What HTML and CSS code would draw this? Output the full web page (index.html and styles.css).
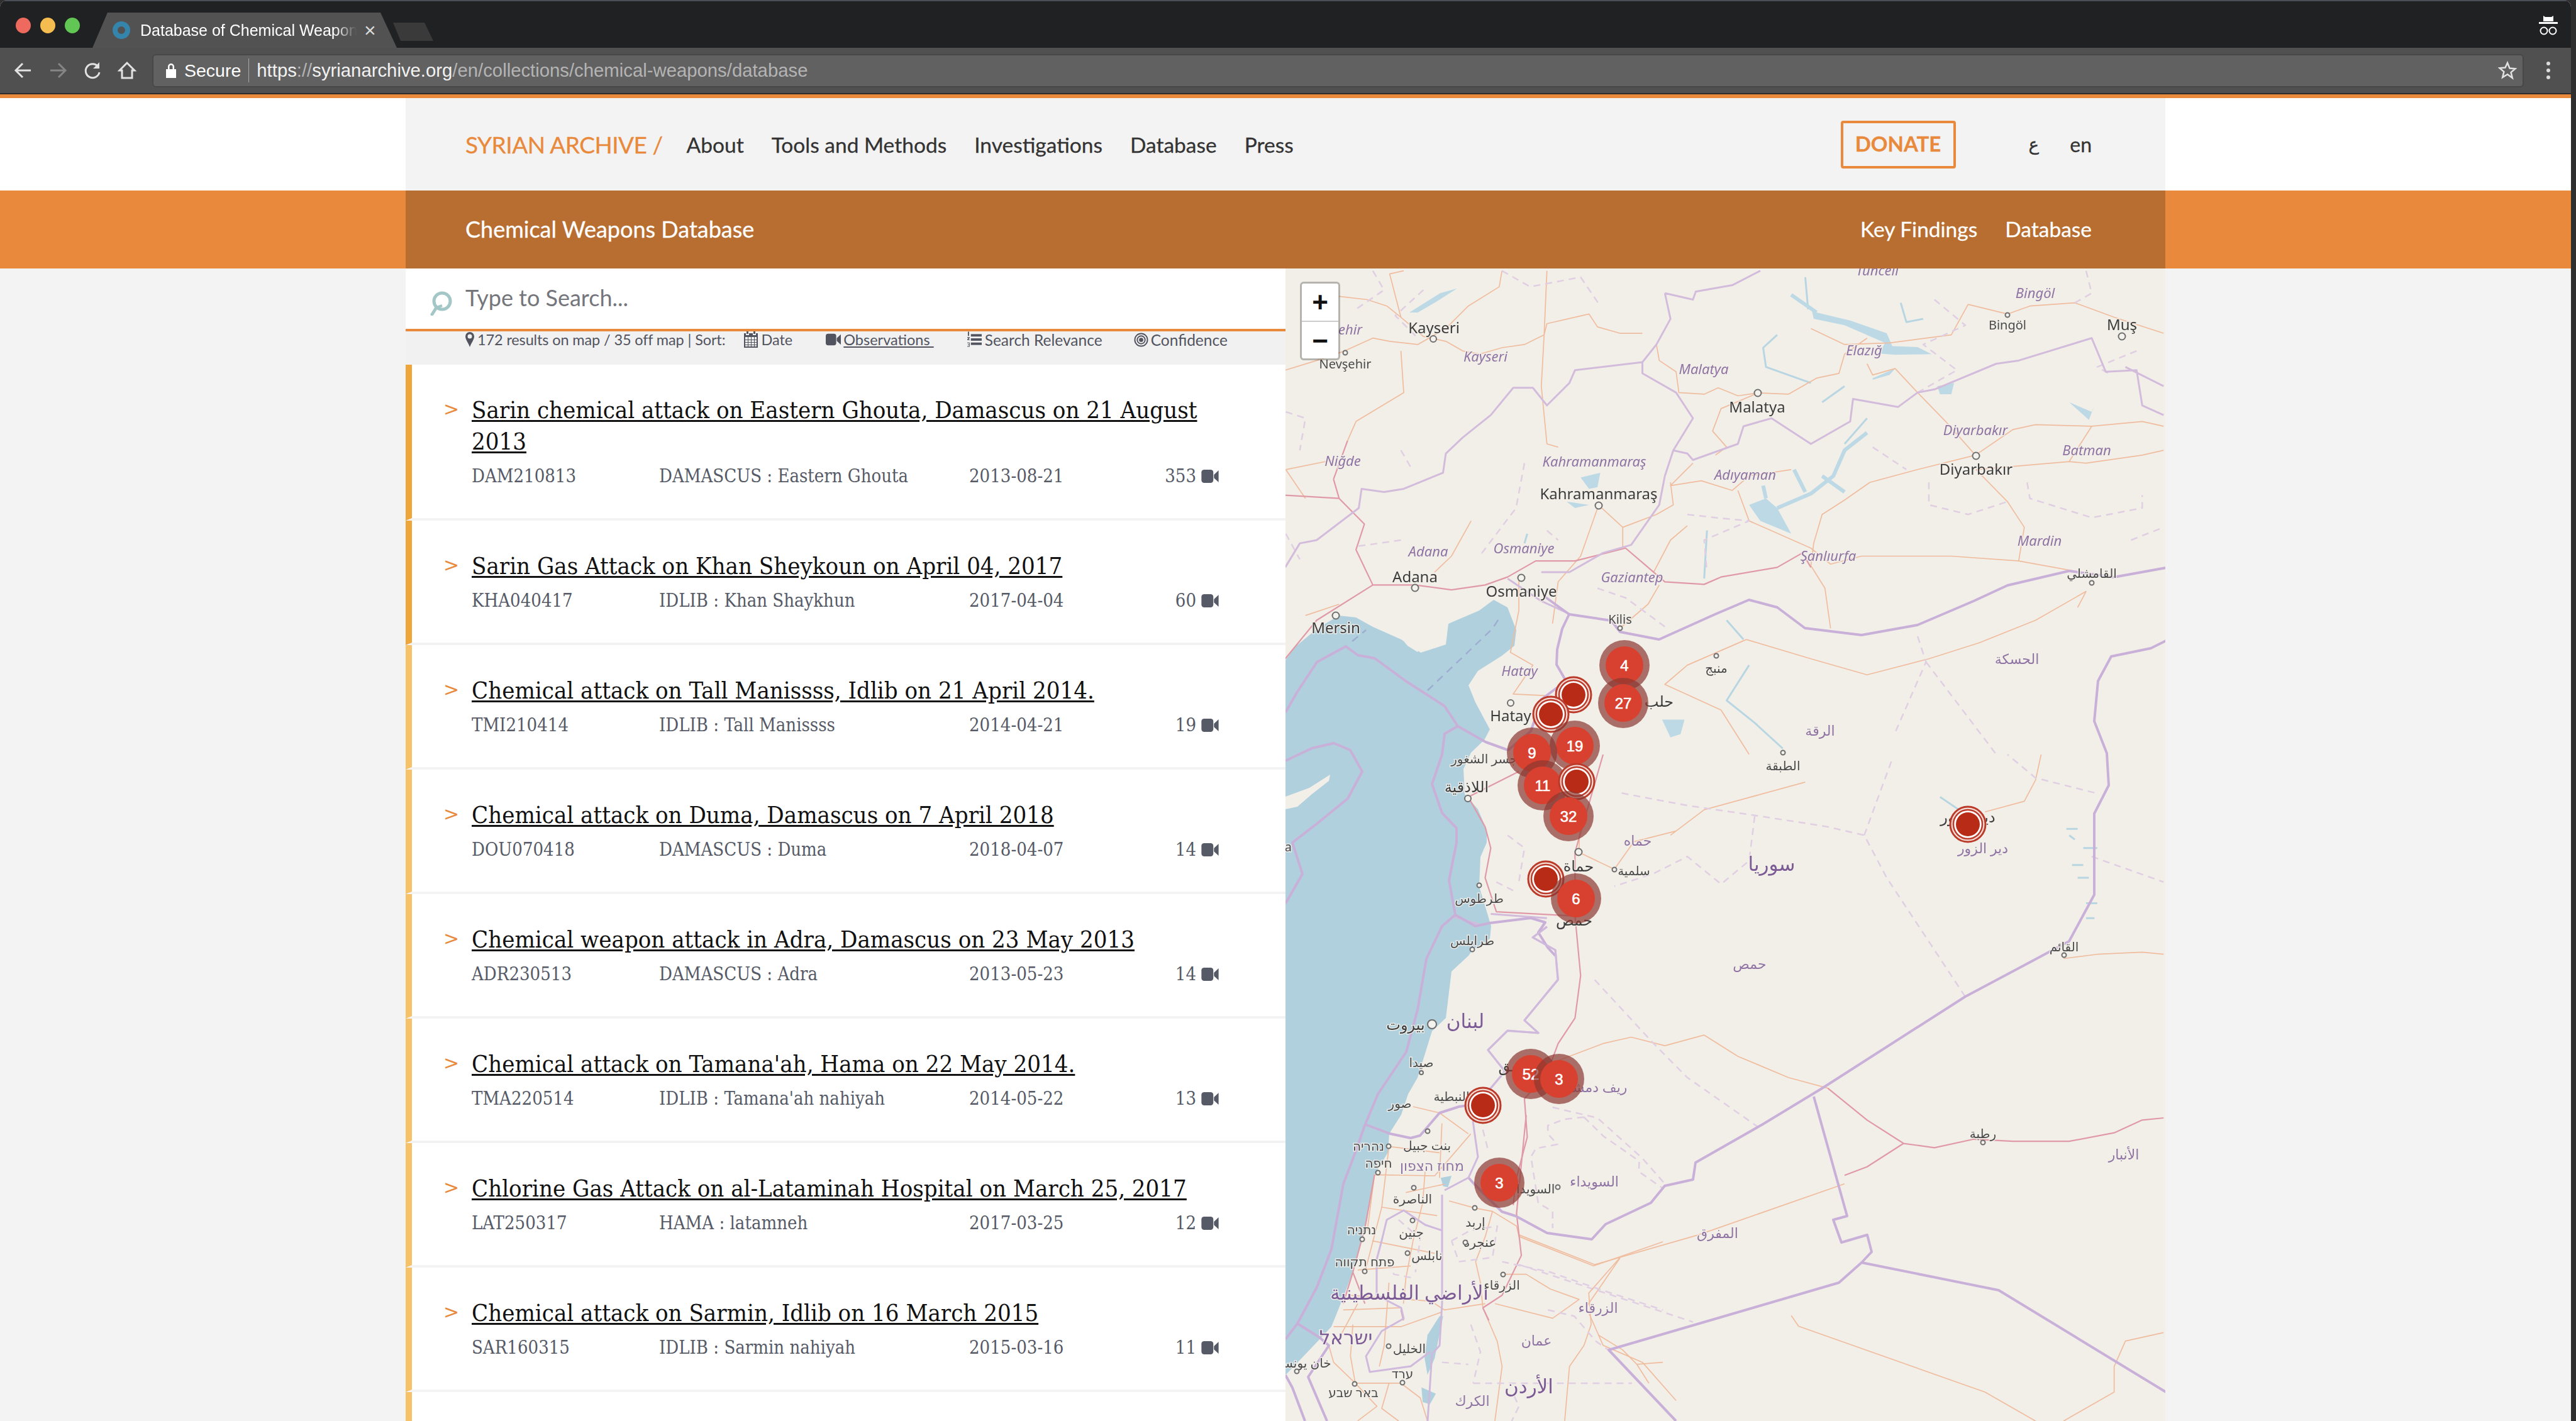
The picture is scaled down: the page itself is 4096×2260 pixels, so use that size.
FILE: index.html
```html
<!DOCTYPE html>
<html lang="en">

<head>
  <meta charset="utf-8" />
  <title>Database of Chemical Weapons</title>
  <link rel="stylesheet" href="styles.css">
</head>

<body>
  <svg class="defs" width="0" height="0">
    <symbol id="ico-video" viewBox="0 0 26 20">
      <rect x="0" y="0" width="18" height="20" rx="4" />
      <path d="M19 7.5 26 1v18l-7-6.5z" />
    </symbol>
    <symbol id="ico-pin" viewBox="0 0 14 24">
      <path fill-rule="evenodd" d="M7 0a7 7 0 0 1 7 7c0 5-5 11-7 17C5 18 0 12 0 7a7 7 0 0 1 7-7zm0 3.500a3.500 3.500 0 1 0 0 7 3.500 3.500 0 0 0 0-7z" />
    </symbol>
    <symbol id="ico-cal" viewBox="0 0 22 26">
      <path fill-rule="evenodd" d="M4 0h3v4H4zM15 0h3v4h-3zM0 3h3v3h5V3h6v3h5V3h3v23H0zM2 9v15h18V9zM2 9" />
      <path d="M2 13h18v1H2zM2 17h18v1H2zM2 21h18v1H2zM6 9h1v15H6zM11 9h1v15h-1zM16 9h1v15h-1z" />
    </symbol>
    <symbol id="ico-list" viewBox="0 0 24 26">
      <rect x="6" y="4" width="18" height="4" />
      <rect x="6" y="11" width="18" height="4" />
      <rect x="6" y="18" width="18" height="4" />
      <path d="M1 0h2v7H1zM0 9h4v1.500L2 13h2v1H0v-1l2-2.500H0zM0 18h4v7H0v-1h3v-2H1v-1h2v-2H0z" />
    </symbol>
    <symbol id="ico-target" viewBox="0 0 24 24">
      <circle cx="12" cy="12" r="10.500" fill="none" stroke="currentColor" stroke-width="2" />
      <circle cx="12" cy="12" r="6.500" fill="none" stroke="currentColor" stroke-width="2" />
      <circle cx="12" cy="12" r="3.500" />
    </symbol>
  </svg>

  <div class="window">
    <!-- browser chrome -->
    <div class="tabbar">
      <span class="light light-red"></span>
      <span class="light light-yellow"></span>
      <span class="light light-green"></span>
      <div class="tab">
        <svg class="favicon" viewBox="0 0 28 28">
          <circle cx="14" cy="14" r="10" fill="none" stroke="#3584ab" stroke-width="8" />
        </svg>
        <span class="tab-title">Database of Chemical Weapons</span>
        <span class="tab-close">×</span>
      </div>
      <div class="newtab"></div>
      <svg class="incognito" viewBox="0 0 30 32">
        <path d="M7 0l3 2h10l3-2v9H7zM0 10h30v3H0z" fill="#fff" />
        <circle cx="8" cy="24" r="5.500" fill="none" stroke="#fff" stroke-width="2" />
        <circle cx="22" cy="24" r="5.500" fill="none" stroke="#fff" stroke-width="2" />
      </svg>
    </div>

    <div class="toolbar">
      <svg class="tb-icon" viewBox="0 0 30 30">
        <path d="M27 15H4M14 4 3 15l11 11" fill="none" stroke="#e2e2e2" stroke-width="3" />
      </svg>
      <svg class="tb-icon" viewBox="0 0 30 30">
        <path d="M3 15h23M16 4l11 11-11 11" fill="none" stroke="#858585" stroke-width="3" />
      </svg>
      <svg class="tb-icon" viewBox="0 0 30 30">
        <path d="M24 9a11 11 0 1 0 2 9" fill="none" stroke="#e2e2e2" stroke-width="3" />
        <path d="M26 2v10H16z" fill="#e2e2e2" />
      </svg>
      <svg class="tb-icon" viewBox="0 0 30 30">
        <path d="M15 3 3 15h4v12h16V15h4z" fill="none" stroke="#e2e2e2" stroke-width="3" />
      </svg>
      <div class="omnibox">
        <svg class="lock" viewBox="0 0 16 24">
          <path d="M0 10h16v14H0z M3 11V6a5 5 0 0 1 10 0v5h-2.500V6a2.500 2.500 0 0 0-5 0v5z" fill="#fff" />
        </svg>
        <span class="secure">Secure</span>
        <span class="url"><b>https</b><i>://</i><b>syrianarchive.org</b><i>/en/collections/chemical-weapons/database</i></span>
        <svg class="star" viewBox="0 0 30 30">
          <path d="M15 3l3.500 8.500 9 .7-6.900 5.900 2.200 8.900L15 21.300 7.200 26l2.200-8.900-6.900-5.900 9-.7z" fill="none" stroke="#e2e2e2" stroke-width="2.500" />
        </svg>
      </div>
      <svg class="menu-dots" viewBox="0 0 8 30">
        <circle cx="4" cy="4" r="3" fill="#dcdcdc" />
        <circle cx="4" cy="15" r="3" fill="#dcdcdc" />
        <circle cx="4" cy="26" r="3" fill="#dcdcdc" />
      </svg>
    </div>

    <!-- site -->
    <div class="page">
      <header class="band band-nav">
        <nav class="wrap sitenav">
          <a class="brand">SYRIAN ARCHIVE /</a>
          <a>About</a>
          <a>Tools and Methods</a>
          <a>Investigations</a>
          <a>Database</a>
          <a>Press</a>
          <a class="donate">DONATE</a>
          <a class="lang lang-ar" lang="ar">ع</a>
          <a class="lang lang-en">en</a>
        </nav>
      </header>
      <div class="band band-sub">
        <div class="wrap subnav">
          <span class="subnav-title">Chemical Weapons Database</span>
          <a class="subnav-first">Key Findings</a>
          <a>Database</a>
        </div>
      </div>

      <main class="wrap content">
        <section class="results">
          <div class="search">
            <svg class="search-icon" viewBox="0 0 36 40">
              <circle cx="20" cy="17" r="13" fill="none" stroke="#a3c6c6" stroke-width="5" />
              <path d="M11 27 4 38" fill="none" stroke="#a3c6c6" stroke-width="5" stroke-linecap="round" />
              <path d="M11 27 20 24" fill="none" stroke="#a3c6c6" stroke-width="4" />
            </svg>
            <span class="search-text">Type to Search...</span>
          </div>
          <div class="sortbar">
            <svg class="ico ico-pin"><use href="#ico-pin" /></svg>
            <span class="count">172 results on map / 35 off map | Sort:</span>
            <span class="sort sort-date"><svg class="ico ico-cal"><use href="#ico-cal" /></svg>Date</span>
            <span class="sort sort-obs"><svg class="ico ico-vid"><use href="#ico-video" /></svg><u>Observations&nbsp;</u></span>
            <span class="sort sort-rel"><svg class="ico ico-list"><use href="#ico-list" /></svg>Search Relevance</span>
            <span class="sort sort-conf"><svg class="ico ico-target"><use href="#ico-target" /></svg>Confidence</span>
          </div>

          <ul class="rows">
            <li class="row row-hot">
              <span class="chev">&gt;</span>
              <div class="row-body">
                <a class="row-title">Sarin chemical attack on Eastern Ghouta, Damascus on 21 August 2013</a>
                <div class="row-meta"><span>DAM210813</span><span>DAMASCUS : Eastern Ghouta</span><span>2013-08-21</span><span class="num">353</span><svg class="vid"><use href="#ico-video" /></svg></div>
              </div>
            </li>
            <li class="row row-hot">
              <span class="chev">&gt;</span>
              <div class="row-body">
                <a class="row-title">Sarin Gas Attack on Khan Sheykoun on April 04, 2017</a>
                <div class="row-meta"><span>KHA040417</span><span>IDLIB : Khan Shaykhun</span><span>2017-04-04</span><span class="num">60</span><svg class="vid"><use href="#ico-video" /></svg></div>
              </div>
            </li>
            <li class="row">
              <span class="chev">&gt;</span>
              <div class="row-body">
                <a class="row-title">Chemical attack on Tall Manissss, Idlib on 21 April 2014.</a>
                <div class="row-meta"><span>TMI210414</span><span>IDLIB : Tall Manissss</span><span>2014-04-21</span><span class="num">19</span><svg class="vid"><use href="#ico-video" /></svg></div>
              </div>
            </li>
            <li class="row">
              <span class="chev">&gt;</span>
              <div class="row-body">
                <a class="row-title">Chemical attack on Duma, Damascus on 7 April 2018</a>
                <div class="row-meta"><span>DOU070418</span><span>DAMASCUS : Duma</span><span>2018-04-07</span><span class="num">14</span><svg class="vid"><use href="#ico-video" /></svg></div>
              </div>
            </li>
            <li class="row">
              <span class="chev">&gt;</span>
              <div class="row-body">
                <a class="row-title">Chemical weapon attack in Adra, Damascus on 23 May 2013</a>
                <div class="row-meta"><span>ADR230513</span><span>DAMASCUS : Adra</span><span>2013-05-23</span><span class="num">14</span><svg class="vid"><use href="#ico-video" /></svg></div>
              </div>
            </li>
            <li class="row">
              <span class="chev">&gt;</span>
              <div class="row-body">
                <a class="row-title">Chemical attack on Tamana'ah, Hama on 22 May 2014.</a>
                <div class="row-meta"><span>TMA220514</span><span>IDLIB : Tamana'ah nahiyah</span><span>2014-05-22</span><span class="num">13</span><svg class="vid"><use href="#ico-video" /></svg></div>
              </div>
            </li>
            <li class="row">
              <span class="chev">&gt;</span>
              <div class="row-body">
                <a class="row-title">Chlorine Gas Attack on al-Lataminah Hospital on March 25, 2017</a>
                <div class="row-meta"><span>LAT250317</span><span>HAMA : latamneh</span><span>2017-03-25</span><span class="num">12</span><svg class="vid"><use href="#ico-video" /></svg></div>
              </div>
            </li>
            <li class="row">
              <span class="chev">&gt;</span>
              <div class="row-body">
                <a class="row-title">Chemical attack on Sarmin, Idlib on 16 March 2015</a>
                <div class="row-meta"><span>SAR160315</span><span>IDLIB : Sarmin nahiyah</span><span>2015-03-16</span><span class="num">11</span><svg class="vid"><use href="#ico-video" /></svg></div>
              </div>
            </li>
            <li class="row row-blank"></li>
          </ul>
        </section>

        <section class="map">
          <!-- the viewBox uses page pixels, so everything below reads as coordinates on the screenshot -->
          <svg class="map-svg" viewBox="2044 427 1399 1833">
            <g class="tiles">
            <rect x="2044" y="427" width="1399" height="1833" fill="#f2efe9" />

            <!-- sea and lakes -->
            <path class="water" d="M2044 1050 2058 1030 2094 1000 2129 979 2156 982 2183 997 2228 1017 2259 1038 2299 1025 2303 992 2352 971 2375 954 2397 966 2411 1002 2408 1027 2388 1043 2350 1067 2335 1090 2346 1117 2362 1147 2369 1160 2360 1177 2339 1197 2327 1223 2329 1263 2350 1287 2364 1320 2364 1340 2354 1363 2352 1410 2362 1443 2371 1473 2369 1493 2342 1510 2335 1520 2308 1545 2299 1619 2277 1640 2254 1714 2239 1740 2228 1773 2209 1803 2207 1833 2186 1867 2174 1940 2151 2023 2136 2063 2117 2110 2086 2143 2044 2187z" />
            <path class="land" d="M2044 1267 2082 1253 2115 1232 2113 1242 2086 1263 2063 1283 2044 1287z" />
            <path class="land" d="M2224 1010 2232 1008 2258 1031 2254 1037 2238 1027z" />
            <g transform="translate(2040 400) scale(.893 .51)">
              <path class="lake" d="M940 170 950 190 1010 215 1075 255 1085 295 1130 298 1155 320 1090 322 1062 318 1072 285 1000 230 945 210z" />
              <path class="lake" d="M1050 395 1090 365 1080 385 1050 400z" />
              <path class="lake" d="M830 790 860 770 880 800 905 880 850 840z" />
              <path class="lake" d="M225 190 280 130 310 115 270 160 240 190z" />
              <path class="lake" d="M1400 470 1440 500 1445 480 1435 525z" />
              <path class="lake" d="M1165 420 1195 410 1190 445 1170 445z" />
              <path class="lake" d="M530 705 565 690 560 735 545 740z" />
              <path class="lake" d="M505 780 545 790 520 800z" />
              <path class="lake" d="M675 1460 715 1460 708 1505 690 1515z" />
              <path class="river" d="M930 80 935 180M880 260 855 300 860 360 940 410M1000 420 960 470M1100 160 1110 220 1140 210M1040 520 1000 600M755 870 750 1020M790 1150 820 1210M830 1290 790 1400 840 1470 890 1550M435 880 430 910" />
              <path class="river-wide" d="M880 800 940 755 980 700 1000 620 1040 565M855 730 860 770M910 680 930 750M960 700 1000 750M905 135 950 190" />
            </g>
            <g transform="translate(2044 1740) scale(.3827 .3333)">
              <path class="water" d="M645 400 690 390 675 445 655 440z" />
              <path class="water" d="M640 1060 655 1060 620 1260 590 1340 578 1260 590 1150z" />
              <path class="water" d="M565 1400 625 1430 600 1480 570 1470z" />
            </g>
            <g transform="translate(2040 1200) scale(.893 .676)">
              <path class="river" d="M1170 100 1215 140M1395 175 1415 175M1400 190 1410 200M1425 220 1450 220M1405 260 1425 260M1415 290 1435 290M1430 350 1450 350M1430 385 1445 385" />
            </g>

            <!-- administrative lines, roads -->
            <g transform="translate(2040 400) scale(.893 .51)">
              <path class="road" d="M100 140 150 150 185 170 210 205 250 265 290 280 320 310 350 320 390 300 430 290 465 260 470 225 545 195 560 235 600 255 640 255M210 205 190 70 215 60M390 60 385 110 330 170 290 240 240 290 190 280 160 270 110 310 60 340 4 370M465 260 470 60M465 260 460 420 470 600 490 610M665 290 670 340 700 375 705 440 750 445 775 425 810 450 846 441 900 445 950 395 990 380 1000 320 1040 270M1040 350 1050 385 1090 365 1130 440 1180 530 1233 635 1300 555 1340 540 1440 545 1530 530 1568 545M940 240 1000 290 1080 285 1190 260 1220 165 1290 195 1330 170 1410 160 1480 205 1568 255M846 441 780 490 765 560 790 610 770 635M5 680 90 650M5 680 40 770M730 660 690 730 745 715 800 745 830 700 905 680M1233 635 1130 680 1045 720 1000 775 960 820 945 910 940 980 965 1050 975 1175M810 745 830 840 940 925 975 975 1030 950 1190 950 1310 965 1420 1000M1234 680 1400 655 1440 545M1234 680 1290 780 1320 860 1310 965M1400 655 1430 660 1530 635 1568 620M562 791 605 860 605 920M562 791 530 950 490 1030 480 1160M605 860 665 820 695 790 690 720M335 840 300 950 270 1000M660 1000 690 900 720 855M420 1020 420 1120 405 1250 445 1290 410 1380 470 1385M600 1175 650 1100 670 1040M825 1210 940 1270 1040 1320 1150 1270 1240 1220 1340 1150 1430 1060 1415 1110M825 1210 720 1290 680 1350 780 1430 830 1568M40 1135 100 1100M115 590 130 530 215 440 210 310" />
              <path class="trunk" d="M4 760 100 770 145 850 130 930 160 1040 235 1040 300 1055 360 1040 400 1015 450 965 520 965 610 925 640 970 680 1030 750 1038 780 1015 880 985 925 940 940 985M160 1040 60 1150 4 1270M90 710 115 590 M100 770 90 710" />
              <path class="dist" d="M160 60 180 120 130 180M250 120 200 200 240 270M390 60 440 110 530 80 565 170M1160 150 1215 230 1140 290 1200 370 1130 440M1430 60 1440 130 1410 160M1520 310 1450 360 1470 380M1150 720 1150 790 1220 820 1290 780M1325 720 1330 770 1440 830 1530 800 1530 760M1510 900 1568 860M1050 610 1110 680M5 500 40 520 30 620M210 620 230 680M430 660 415 800 350 950M210 900 130 920M470 870 490 900M720 820 770 830 830 840 750 900 755 1000M560 1050 610 1080 680 1170M1130 1200 1145 1280 1090 1500M1145 1280 1270 1568M5 880 30 960" />
              <path class="prov" d="M640 345 520 370 510 410 470 480 445 425 410 425 370 510 320 580 290 630 285 690 215 740 180 750 140 740 135 800 60 900 30 910 4 985M680 130 690 210 665 290 640 345 640 380 700 440 730 520 695 620 720 630 730 650 810 600 820 545 870 520 940 600 1010 530 1015 460 1095 485 1130 440 1160 430 1270 350 1310 340 1440 270 1465 375 1520 370 1530 480 1568 510M680 130 730 150 735 125 800 105 850 60M695 620 680 700 670 790 620 915 570 940 510 1000 460 1000M400 1020 460 1090 510 1130M1568 420 1500 360" />
            </g>
            <g transform="translate(2040 1200) scale(.893 .676)">
              <path class="road" d="M1000 1010 740 1130 555 1200 420 1130M490 720 570 680 620 665 680 685 750 660 810 710 900 760 970 785M600 1185 540 1300 570 1390 640 1430 700 1520M905 1320 918 1345 1250 1500 1340 1568M1568 1360 1500 1380 1480 1440 1480 1500 1390 1568M1390 480 1450 470 1530 465 1568 470M1250 135 1320 110 1340 60 1350 0M690 190 750 130 930 65M590 270 527 230M590 270 625 205 700 180M527 230 530 110" />
              <path class="trunk" d="M520 230 520 380 530 520 520 620 490 680 470 750 430 810 435 900 415 1000 410 1060M360 170 370 220 360 290 380 370 520 380M970 785 1040 860 1105 915 1160 925 1230 905 1300 910 1400 910 1480 890 1530 860 1568 855M1105 915 1040 970 1000 990M570 0 520 230M360 170 330 100 420 40" />
              <path class="dist" d="M1215 570 1140 420 1075 290 1035 190 970 170 850 145 720 120 600 90M1035 190 1085 10M840 145 830 250 780 305 720 240 660 280 590 310M1445 90 1340 55 1290 0M1440 240 1568 300M555 530 660 680 720 760 850 880M480 830 560 855 640 950 680 1010M420 1200 730 1335M400 190 430 220 420 300M380 300 410 320" />
              <path class="prov" d="M470 405 445 430 485 460 490 530 430 625 455 655 400 650 365 695 395 745 335 840M370 375 470 385M300 380 350 400" />
            </g>
            <g transform="translate(2044 1740) scale(.3827 .3333)">
              <path class="road" d="M370 385 340 650M430 250 400 540 330 850M430 250 640 280M370 385 620 390 770 190M500 470 660 430M400 540 630 580M360 700 620 760M300 840 520 820M260 960 620 990M240 1030 480 1020M200 1110 480 1110 650 1040M280 1100 270 1250 290 1380 480 1380 560 1450 590 1560M290 1380 200 1280 180 1200M290 1380 380 1490 300 1560M650 140 640 400M580 370 570 520 530 700 500 880 490 1000M430 900 410 1200 390 1300M680 510 790 545 860 560 960 630 970 680 1280 820 1568 705M860 560 830 680 790 800 810 900 820 1020 880 1180 900 1300 870 1560M900 860 1000 860 1100 930 1220 980 1110 1070 870 1000M1390 780 1260 950 1270 1100 1240 1200 1180 1300 1160 1560M1300 1150 1400 1220 1460 1290 1568 1280M1460 1290 1510 1380M530 60 640 90 760 190M300 1000 230 1150M620 1000 660 1030 830 1000M430 1380 400 1500 470 1560" />
              <path class="trunk" d="M1000 100 960 570 980 770 900 960 820 1020M370 385 330 640 280 850 240 1000M280 850 330 1000M820 1020 845 1080M480 1030 490 1080" />
              <path class="dist" d="M1240 110 1160 120 1090 150 1090 190 1130 240 1040 260 1020 300 1050 520 1110 560 1110 640M1240 110 1320 200 1470 320 1468 370 1568 450M780 1380 1440 1380M690 700 770 650 880 630 860 780 720 800 690 700M900 800 1100 850 1300 930 1568 1030M1090 1030 1200 1060 1290 1180 1340 1220M820 170 840 260M770 1100 810 1230 780 1380M430 800 450 860 540 880M650 1280 760 1290M470 600 560 690 540 850M950 1440 970 1490 940 1560" />
            </g>

            <!-- national borders and sea boundaries -->
            <path class="nation" d="M2044 1133 2063 1100 2094 1053 2140 1028 2159 1042 2186 1047 2235 1083 2297 1123 2318 1155 2362 1180 2398 1193 2434 1163 2442 1140 2450 1113 2490 1083 2475 1057 2476 1033 2484 1000 2495 977 2455 948" />
            <path class="nation" d="M2318 1155 2297 1167 2293 1200 2277 1247 2293 1293 2316 1317 2316 1340 2304 1400 2314 1455 2346 1473 2369 1468 2434 1460 2457 1467 2446 1483 2461 1507 2473 1520" />
            <path class="nation" d="M2314 1455 2293 1473 2268 1525 2254 1606 2236 1673 2191 1740 2170 1790 2155 1833 2136 1883 2117 1987 2094 2047 2063 2105 2044 2130" />
            <path class="nation" d="M2044 1210 2086 1190 2121 1182 2147 1193 2166 1227 2143 1270 2094 1310 2055 1340 2071 1390 2044 1437" />
            <path class="nation" d="M2170 1788 2210 1803 2243 1810 2258 1806 2289 1770 2320 1760 2342 1757" />
            <path class="nation" d="M2063 2105 2098 2127 2113 2140 2080 2190 2110 2260M2044 2187 2055 2207 2075 2260" />
            <path class="nation" d="M2495 977 2562 987 2576 1005 2638 1017 2727 977 2781 954 2826 966 2870 999 2960 1010 3049 994 3138 956 3192 931 3290 908 3361 918 3444 903" />
            <path class="nation" d="M3444 1019 3420 1031 3357 1044 3336 1083 3330 1147 3350 1198 3353 1249 3330 1294 3330 1423 3290 1497 3219 1535 3125 1585 2897 1731 2803 1788 2696 1849 2692 1876 2647 1886 2625 1913 2553 1947 2531 1971 2460 1961 2410 1934 2388 1927 2344 1883 2335 1873" />
            <path class="nation" d="M2884 1744 2937 1934 2915 1940 2928 1976 2969 1964 2976 1991 2960 2008 2924 2040 2558 2147 2665 2260M2960 2008 3178 2052 3444 2214" />
            <path class="nation-thin" d="M2293 1900 2293 2073 2289 2140 2277 2153 2270 2260M2293 1957 2266 1948 2232 1925 2205 1940 2197 1973 2189 2003 2189 2060 2228 2080 2232 2097 2197 2117 2172 2157 2178 2182 2243 2173 2274 2150M2342 1783 2350 1840 2335 1873 2297 1893M2460 1474 2437 1491 2473 1511 2477 1558 2424 1623 2446 1643 2397 1639 2366 1670 2393 1704 2339 1768" />
            <path class="sea-dash" d="M2270 1098 2373 1000 2386 980" />
            <path class="sea-dash" d="M2150 1020 2172 1002" />

            <!-- place labels -->
            <g class="lbl-state">
              <text x="2147" y="532">ehir</text>
              <text x="2362" y="575">Kayseri</text>
              <text x="2985" y="438">Tunceli</text>
              <text x="3236" y="474">Bingöl</text>
              <text x="2709" y="595">Malatya</text>
              <text x="2964" y="565">Elazığ</text>
              <text x="3141" y="692">Diyarbakır</text>
              <text x="3318" y="724">Batman</text>
              <text x="2135" y="741">Niğde</text>
              <text x="2535" y="742">Kahramanmaraş</text>
              <text x="2775" y="763">Adıyaman</text>
              <text x="2271" y="885">Adana</text>
              <text x="2423" y="880">Osmaniye</text>
              <text x="2907" y="892">Şanlıurfa</text>
              <text x="2595" y="926">Gaziantep</text>
              <text x="3243" y="868">Mardin</text>
              <text x="2416" y="1075">Hatay</text>
              <text x="3470" y="482">Muş</text>
            </g>
            <g class="lbl-ar">
              <text x="3207" y="1056">الحسكة</text>
              <text x="2894" y="1170">الرقة</text>
              <text x="2604" y="1345">حماه</text>
              <text x="2782" y="1541">حمص</text>
              <text x="2535" y="1737">ريف دمشق</text>
              <text x="3153" y="1357">دير الزور</text>
              <text x="3377" y="1844">الأنبار</text>
              <text x="2535" y="1887">السويداء</text>
              <text x="2731" y="1969">المفرق</text>
              <text x="2541" y="2088">الزرقاء</text>
              <text x="2443" y="2140">عمان</text>
              <text x="2341" y="2236">الكرك</text>
              <text x="2277" y="1862">מחוז הצפון</text>
            </g>
            <g class="lbl-country">
              <text x="2817" y="1385">سوريا</text>
              <text x="2330" y="1635">لبنان</text>
              <text x="2241" y="2067">الأراضي الفلسطينية</text>
              <text x="2140" y="2138">ישראל</text>
              <text x="2431" y="2216">الأردن</text>
            </g>
            <g class="lbl-city">
              <text x="2280" y="530">Kayseri</text>
              <text x="2794" y="656">Malatya</text>
              <text x="3374" y="525">Muş</text>
              <text x="3142" y="755">Diyarbakır</text>
              <text x="2542" y="794">Kahramanmaraş</text>
              <text x="2250" y="926">Adana</text>
              <text x="2419" y="949">Osmaniye</text>
              <text x="2124" y="1007">Mersin</text>
              <text x="2402" y="1147">Hatay</text>
              <text x="2638" y="1124">حلب</text>
              <text x="2510" y="1386">حماة</text>
              <text x="2503" y="1472">حمص</text>
              <text x="2332" y="1260">اللاذقية</text>
              <text x="2235" y="1638">بيروت</text>
              <text x="2415" y="1704">دمشق</text>
              <text x="3129" y="1308">دير الزور</text>
            </g>
            <g class="lbl-town">
              <text x="2139" y="586">Nevşehir</text>
              <text x="3192" y="524">Bingöl</text>
              <text x="2576" y="992">Kilis</text>
              <text x="3326" y="919">القامشلي</text>
              <text x="2729" y="1070">منبج</text>
              <text x="2835" y="1225">الطبقة</text>
              <text x="2360" y="1214">جسر الشغور</text>
              <text x="2598" y="1392">سلمية</text>
              <text x="2352" y="1436">طرطوس</text>
              <text x="2341" y="1503">طرابلس</text>
              <text x="3282" y="1513">القائم</text>
              <text x="2260" y="1697">صيدا</text>
              <text x="2308" y="1751">النبطية</text>
              <text x="2226" y="1762">صور</text>
              <text x="3153" y="1810">رطبة</text>
              <text x="2269" y="1829">بنت جبيل</text>
              <text x="2176" y="1830">נהריה</text>
              <text x="2192" y="1857">חיפה</text>
              <text x="2437" y="1898">السويداء</text>
              <text x="2246" y="1914">الناصرة</text>
              <text x="2346" y="1951">إربد</text>
              <text x="2244" y="1967">جنين</text>
              <text x="2165" y="1963">נתניה</text>
              <text x="2353" y="1983">عنجرة</text>
              <text x="2269" y="2004">نابلس</text>
              <text x="2170" y="2014">פתח תקווה</text>
              <text x="2388" y="2051">الزرقاء</text>
              <text x="2241" y="2152">الخليل</text>
              <text x="2074" y="2175">خان يونس</text>
              <text x="2230" y="2192">ערד</text>
              <text x="2152" y="2222">באר שבע</text>
              <text x="2002" y="1354">Famagusta</text>
            </g>
            <g class="dots">
              <circle cx="2279" cy="539" r="5" /><circle cx="2139" cy="561" r="3.500" /><circle cx="2795" cy="625" r="5.500" />
              <circle cx="3192" cy="501" r="3.500" /><circle cx="3374" cy="535" r="5.500" /><circle cx="3142" cy="725" r="5.500" />
              <circle cx="2542" cy="804" r="5.500" /><circle cx="2250" cy="935" r="5.500" /><circle cx="2419" cy="919" r="5.500" />
              <circle cx="3326" cy="927" r="3.500" /><circle cx="2124" cy="979" r="5.500" /><circle cx="2576" cy="999" r="3.500" />
              <circle cx="2729" cy="1043" r="3.500" /><circle cx="2402" cy="1118" r="5" /><circle cx="2835" cy="1197" r="3.500" />
              <circle cx="2334" cy="1270" r="5" /><circle cx="2510" cy="1355" r="5.500" /><circle cx="2567" cy="1383" r="3.500" />
              <circle cx="2352" cy="1408" r="3.500" /><circle cx="2341" cy="1510" r="3.500" /><circle cx="3282" cy="1519" r="3.500" />
              <circle cx="2277" cy="1629" r="7" /><circle cx="2260" cy="1706" r="3" /><circle cx="2270" cy="1799" r="3.500" />
              <circle cx="3153" cy="1817" r="3.500" /><circle cx="2208" cy="1823" r="3.500" /><circle cx="2191" cy="1865" r="3.500" />
              <circle cx="2477" cy="1888" r="3.500" /><circle cx="2248" cy="1889" r="3.500" /><circle cx="2345" cy="1921" r="3.500" />
              <circle cx="2246" cy="1941" r="3.500" /><circle cx="2166" cy="1971" r="3.500" /><circle cx="2330" cy="1976" r="3.500" />
              <circle cx="2238" cy="1993" r="3.500" /><circle cx="2170" cy="2022" r="3.500" /><circle cx="2390" cy="2027" r="3.500" />
              <circle cx="2208" cy="2141" r="3.500" /><circle cx="2062" cy="2181" r="3.500" /><circle cx="2230" cy="2199" r="3.500" /><circle cx="2154" cy="2201" r="3.500" />
            </g>
            </g>

            <!-- incident markers -->
            <g class="single" transform="translate(2502 1105)"><circle class="s3" r="28" /><circle class="s2" r="23" /><circle class="s1" r="19" /></g>
            <g class="single" transform="translate(2466 1136)"><circle class="s3" r="28" /><circle class="s2" r="23" /><circle class="s1" r="19" /></g>
            <g class="cluster" transform="translate(2583 1058)"><circle class="halo" r="40" /><circle class="core" r="30" /><text y="9">4</text></g>
            <g class="cluster" transform="translate(2581 1118)"><circle class="halo" r="40" /><circle class="core" r="30" /><text y="9">27</text></g>
            <g class="cluster" transform="translate(2504 1186)"><circle class="halo" r="40" /><circle class="core" r="30" /><text y="9">19</text></g>
            <g class="cluster" transform="translate(2436 1197)"><circle class="halo" r="40" /><circle class="core" r="30" /><text y="9">9</text></g>
            <g class="cluster" transform="translate(2453 1249)"><circle class="halo" r="40" /><circle class="core" r="30" /><text y="9">11</text></g>
            <g class="single" transform="translate(2507 1243)"><circle class="s3" r="28" /><circle class="s2" r="23" /><circle class="s1" r="19" /></g>
            <g class="cluster" transform="translate(2494 1298)"><circle class="halo" r="40" /><circle class="core" r="30" /><text y="9">32</text></g>
            <g class="single" transform="translate(2458 1398)"><circle class="s3" r="28" /><circle class="s2" r="23" /><circle class="s1" r="19" /></g>
            <g class="cluster" transform="translate(2506 1429)"><circle class="halo" r="40" /><circle class="core" r="30" /><text y="9">6</text></g>
            <g class="cluster" transform="translate(2434 1708)"><circle class="halo" r="40" /><circle class="core" r="30" /><text y="9">52</text></g>
            <g class="cluster" transform="translate(2479 1716)"><circle class="halo" r="40" /><circle class="core" r="30" /><text y="9">3</text></g>
            <g class="single" transform="translate(2358 1758)"><circle class="s3" r="28" /><circle class="s2" r="23" /><circle class="s1" r="19" /></g>
            <g class="cluster" transform="translate(2384 1881)"><circle class="halo" r="40" /><circle class="core" r="30" /><text y="9">3</text></g>
            <g class="single" transform="translate(3129 1311)"><circle class="s3" r="28" /><circle class="s2" r="23" /><circle class="s1" r="19" /></g>
          </svg>

          <div class="zoom">
            <span class="zoom-btn">+</span>
            <span class="zoom-btn">−</span>
          </div>
        </section>
      </main>
    </div>
  </div>
</body>

</html>
```

FILE: styles.css
```css
* {
  box-sizing: border-box;
}

html,
body {
  margin: 0;
  height: 100%;
  overflow: hidden;
}

body {
  background-color: #2f2f2f;
  color: #333;
  font: 33.500px Lato, sans-serif;
}

a {
  color: inherit;
}

.defs {
  position: absolute;
}

.window {
  width: 4088px;
  height: 2260px;
  overflow: hidden;
  border-radius: 12px 12px 0 0;
  background-color: #f3f3f3;
}

/* browser chrome */
.tabbar {
  display: flex;
  align-items: flex-end;
  height: 76px;
  padding-left: 25px;
  background-color: #202122;
  border-top: 2px solid #4a4f57;
}

.light {
  align-self: flex-start;
  width: 24px;
  height: 25px;
  margin: 26px 15px 0 0;
  border-radius: 50%;
}

.light-red {
  background-color: #ee6a5f;
}

.light-yellow {
  background-color: #f5bd4f;
}

.light-green {
  background-color: #62c654;
}

.tab {
  display: flex;
  align-items: center;
  width: 484px;
  height: 56px;
  margin-left: 5px;
  padding: 0 0 0 32px;
  background-color: #525252;
  clip-path: polygon(0 100%, 24px 0, 458px 0, 100% 100%);
  color: #fff;
  font: 25px "Liberation Sans", sans-serif;
}

.favicon {
  flex: none;
  width: 28px;
  height: 28px;
}

.tab-title {
  width: 344px;
  margin-left: 16px;
  overflow: hidden;
  white-space: nowrap;
  -webkit-mask-image: linear-gradient(to right, #000 90%, transparent);
  mask-image: linear-gradient(to right, #000 90%, transparent);
}

.tab-close {
  margin-left: 12px;
  color: #ddd;
  font-size: 32px;
}

.newtab {
  align-self: flex-start;
  width: 64px;
  height: 29px;
  margin: 34px 0 0 -6px;
  background-color: #3a3a3a;
  clip-path: polygon(0 0, 50px 0, 100% 100%, 12px 100%);
}

.incognito {
  align-self: flex-start;
  width: 30px;
  height: 32px;
  margin: 23px 21px 0 auto;
}

.toolbar {
  display: flex;
  align-items: center;
  height: 74px;
  padding-left: 22px;
  background-color: #505050;
  border-bottom: 2px solid #2c2c2c;
}

.tb-icon {
  flex: none;
  width: 30px;
  height: 30px;
  margin-right: 25px;
}

.omnibox {
  display: flex;
  align-items: center;
  width: 3771px;
  height: 53px;
  padding: 0 9px 0 20px;
  background-color: #616161;
  border: 2px solid #474747;
  border-radius: 6px;
  font: 29.300px "Liberation Sans", sans-serif;
}

.lock {
  width: 16px;
  height: 24px;
}

.secure {
  margin-left: 13px;
  padding-right: 12px;
  border-right: 1px solid #a8a8a8;
  color: #fff;
  font-size: 28.500px;
  line-height: 38px;
}

.url {
  margin-left: 12px;
  white-space: nowrap;
}

.url b {
  color: #f2f2f2;
  font-weight: 400;
}

.url i {
  color: #b4b4b4;
  font-style: normal;
}

.star {
  width: 30px;
  height: 30px;
  margin-left: auto;
}

.menu-dots {
  width: 8px;
  height: 30px;
  margin-left: 35px;
}

/* site header */
.page {
  border-top: 6px solid #e8893b;
}

.wrap {
  width: 2798px;
  margin: 0 auto;
}

.band-nav {
  height: 147px;
  background-color: #fff;
}

.sitenav {
  display: flex;
  align-items: center;
  gap: 44px;
  height: 100%;
  padding: 0 117px 0 95px;
  background-color: #f3f3f3;
  white-space: nowrap;
  -webkit-text-stroke: 0.3px;
}

.brand {
  margin-right: -6px;
  color: #e8893b;
  font-size: 37px;
  letter-spacing: -0.5px;
}

.donate {
  display: flex;
  align-items: center;
  justify-content: center;
  width: 183px;
  height: 76px;
  margin-left: auto;
  padding-bottom: 4px;
  border: 4px solid #e8893b;
  border-radius: 4px;
  color: #e8893b;
  font-weight: 700;
  font-size: 33px;
}

.lang {
  font-size: 32px;
}

.lang-ar {
  margin-left: 72px;
  font-family: "DejaVu Sans", sans-serif;
  font-size: 28px;
}

.lang-en {
  margin-left: 5px;
}

.band-sub {
  height: 124px;
  background-color: #e8893b;
}

.subnav {
  display: flex;
  align-items: center;
  gap: 44px;
  height: 100%;
  padding: 0 117px 3px 95px;
  background-color: #b86e30;
  color: #fff;
  -webkit-text-stroke: 0.3px;
}

.subnav-title {
  font-size: 36px;
}

.subnav-first {
  margin-left: auto;
}

/* search and results */
.content {
  display: grid;
  grid-template-columns: 1399px 1399px;
}

.search {
  display: flex;
  align-items: center;
  height: 100px;
  padding: 0 0 5px 38px;
  background-color: #fff;
  border-bottom: 4px solid #e8893b;
}

.search-icon {
  width: 36px;
  height: 40px;
  margin-top: 18px;
}

.search-text {
  margin-left: 21px;
  color: #74767c;
  font-size: 36px;
}

.sortbar {
  display: flex;
  align-items: center;
  height: 53px;
  padding: 0 0 27px 95px;
  background-color: #f1f1f1;
  color: #51545f;
  font-size: 23.500px;
  white-space: nowrap;
}

.count {
  letter-spacing: -0.13px;
}

.ico {
  flex: none;
  fill: currentColor;
}

.ico-pin {
  width: 14px;
  height: 24px;
  margin-right: 5px;
}

.ico-cal {
  width: 22px;
  height: 26px;
  margin-right: 5px;
}

.ico-vid {
  width: 24px;
  height: 20px;
  margin-right: 4px;
}

.ico-list {
  width: 23px;
  height: 26px;
  margin-right: 5px;
}

.ico-target {
  width: 23px;
  height: 23px;
  margin-right: 4px;
}

.sort {
  display: flex;
  align-items: center;
}

.sort-date {
  margin-left: 30px;
}

.sort-obs {
  margin-left: 53px;
}

.sort-rel {
  margin-left: 53px;
  font-size: 24.500px;
}

.sort-conf {
  margin-left: 50px;
  font-size: 24.500px;
}

.rows {
  margin: 0;
  padding: 0;
  list-style: none;
}

.row {
  display: flex;
  height: 198px;
  padding: 47px 0 0 50px;
  background-color: #fff;
  border-left: 10px solid #f5c26a;
  border-bottom: 4px solid #f3f3f3;
}

.row:first-child {
  height: 248px;
}

.row-hot {
  border-left-color: #eea63a;
}

.row-blank {
  height: 300px;
}

.chev {
  width: 45px;
  color: #e8893b;
  font: 30px/48px "DejaVu Sans", sans-serif;
}

.row-body {
  width: 1200px;
}

.row-title {
  display: block;
  max-width: 1180px;
  color: #111;
  font: 38px/50px "DejaVu Serif Condensed", "DejaVu Serif", serif;
  font-stretch: condensed;
  text-decoration: underline;
  text-underline-offset: 3px;
}

.row-meta {
  display: flex;
  align-items: center;
  height: 40px;
  margin-top: 10px;
  color: #555a66;
  font: 29px "DejaVu Serif Condensed", "DejaVu Serif", serif;
  font-stretch: condensed;
}

.row-meta span {
  flex: none;
}

.row-meta span:nth-child(1) {
  width: 298px;
}

.row-meta span:nth-child(2) {
  width: 493px;
}

.row-meta span:nth-child(3) {
  width: 270px;
}

.row-meta .num {
  width: 91px;
  text-align: right;
}

.vid {
  flex: none;
  width: 28px;
  height: 21px;
  margin-left: 8px;
  fill: #555a66;
}

/* map */
.map {
  position: relative;
  height: 1833px;
  overflow: hidden;
}

.map-svg {
  display: block;
  width: 1399px;
  height: 1833px;
  font-family: "Noto Sans", "DejaVu Sans", sans-serif;
  text-anchor: middle;
}

/* the tiles in the screenshot are upscaled, so the base map is a bit soft */
.tiles {
  filter: blur(0.6px);
}

.water {
  fill: #b0d0de;
  stroke: none;
}

.lake {
  fill: #bcd9e5;
  stroke: none;
}

.land {
  fill: #f2efe9;
}

.river,
.river-wide,
.road,
.trunk,
.dist,
.prov,
.nation,
.nation-thin,
.sea-dash {
  fill: none;
  stroke-linejoin: round;
  vector-effect: non-scaling-stroke;
}

.river {
  stroke: #b8d6e2;
  stroke-width: 3;
}

.river-wide {
  stroke: #bcd9e5;
  stroke-width: 6;
}

.road {
  stroke: #f0bc9e;
  stroke-width: 1.700;
}

.trunk {
  stroke: #e099a6;
  stroke-width: 2.200;
}

.dist {
  stroke: #e0cfe2;
  stroke-width: 2.500;
  stroke-dasharray: 11 8;
}

.prov {
  stroke: #d3bcdb;
  stroke-width: 3;
}

.nation {
  stroke: #c9b0d8;
  stroke-width: 4;
}

.nation-thin {
  stroke: #cfb9dc;
  stroke-width: 3;
}

.sea-dash {
  stroke: #9eaed0;
  stroke-width: 2.500;
  stroke-dasharray: 12 9;
}

.lbl-city text,
.lbl-town text,
.lbl-state text,
.lbl-ar text,
.lbl-country text {
  paint-order: stroke;
  stroke: rgba(242, 239, 233, 0.85);
  stroke-width: 3px;
}

.lbl-city {
  fill: #3c3c3c;
  font-size: 24px;
}

.lbl-town {
  fill: #4a4a4a;
  font-size: 20px;
}

.lbl-state {
  fill: #8f74a3;
  font-size: 22px;
  font-style: italic;
}

.lbl-ar {
  fill: #8f74a3;
  font-size: 22px;
}

.lbl-country {
  fill: #7b5a95;
  font-size: 31px;
}

.dots circle {
  fill: #f4f2ec;
  stroke: #6e6e6e;
  stroke-width: 2;
}

.halo {
  fill: rgba(140, 55, 48, 0.7);
}

.core {
  fill: #d8412f;
}

.cluster text {
  fill: #fff;
  font: 24px "Liberation Sans", sans-serif;
  stroke: #fff;
  stroke-width: 0.600px;
}

.s3 {
  fill: rgba(244, 220, 212, 0.9);
  stroke: #bb3a2a;
  stroke-width: 3;
}

.s2 {
  fill: #fff;
  stroke: #bb3a2a;
  stroke-width: 2.500;
}

.s1 {
  fill: #b82c17;
}

.zoom {
  position: absolute;
  top: 21px;
  left: 23px;
  display: flex;
  flex-direction: column;
  width: 64px;
  height: 125px;
  overflow: hidden;
  background-color: #fff;
  background-clip: padding-box;
  border: 3px solid rgba(0, 0, 0, 0.25);
  border-radius: 6px;
}

.zoom-btn {
  flex: 1;
  color: #111;
  font: 700 44px/59px "Liberation Sans", sans-serif;
  text-align: center;
}

.zoom-btn + .zoom-btn {
  border-top: 2px solid #ccc;
}
```
